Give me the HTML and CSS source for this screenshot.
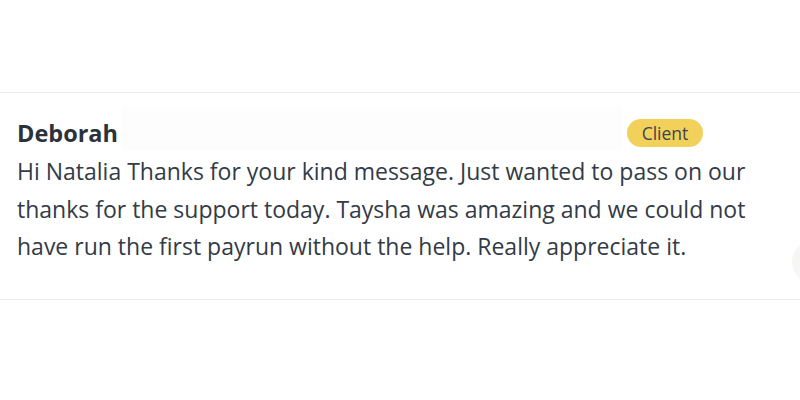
FILE: index.html
```html
<!DOCTYPE html>
<html>
<head>
<meta charset="utf-8">
<link rel="stylesheet" href="styles.css">
</head>
<body>
<div class="page">
  <div class="item">
    <div class="item-head">
      <span class="name">Deborah</span>
      <span class="placeholder"></span>
      <span class="badge">Client</span>
    </div>
    <p class="message">Hi Natalia Thanks for your kind message. Just wanted to pass on our thanks for the support today. Taysha was amazing and we could not have run the first payrun without the help. Really appreciate it.</p>
    <span class="scroll-btn"></span>
  </div>
</div>
</body>
</html>
```

FILE: styles.css
```css
html, body {
  margin: 0;
  padding: 0;
  background: #ffffff;
}
body {
  width: 800px;
  height: 400px;
  overflow: hidden;
  font-family: "Open Sans", "Noto Sans", sans-serif;
  color: #333b46;
}
.page {
  padding-top: 92px;
}
.item {
  position: relative;
  border-top: 1px solid #efeae6;
  border-bottom: 1px solid #efeae6;
  padding: 14px 17px 0 17px;
  height: 192px;
  box-sizing: content-box;
}
.item-head {
  display: flex;
  align-items: center;
  width: 686px;
  height: 43px;
}
.name {
  font-weight: 700;
  font-size: 23.5px;
  color: #2b323c;
  line-height: 34px;
  margin-top: 9px;
}
.placeholder {
  flex: 1;
  align-self: stretch;
  margin-left: 4px;
  margin-right: 5px;
  background: #fdfdfd;
}
.badge {
  display: inline-flex;
  align-items: center;
  justify-content: center;
  width: 76px;
  height: 28px;
  margin-top: 9px;
  border-radius: 14px;
  background: #f2d15a;
  color: #3d4451;
  font-size: 17.5px;
}
.message {
  margin: 3px 0 0 0;
  font-size: 23px;
  line-height: 37.5px;
  width: 770px;
}
.scroll-btn {
  position: absolute;
  right: -36px;
  top: 147px;
  width: 44px;
  height: 44px;
  border-radius: 50%;
  background: #f7f6f5;
}
```
